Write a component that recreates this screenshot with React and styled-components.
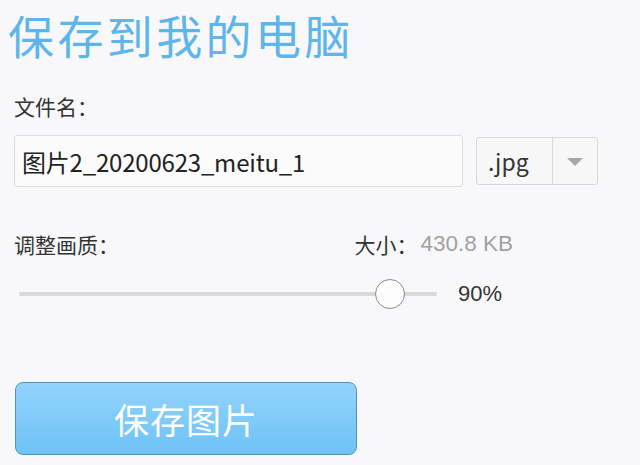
import React from "react";
import styled, { createGlobalStyle } from "styled-components";

const Global = createGlobalStyle`
  html, body { margin: 0; padding: 0; background: #f8f8fb; }
  body { font-family: "Noto Sans CJK SC", "Noto Sans", sans-serif; }
`;

const Page = styled.div`
  width: 640px;
  height: 465px;
  box-sizing: border-box;
  padding: 4px 0 0 14px;
  display: flex;
  flex-direction: column;
  overflow: hidden;
`;

const Title = styled.h1`
  margin: 0 0 0 -6px;
  font-size: 46px;
  font-weight: 400;
  letter-spacing: 3.4px;
  color: #5db5e9;
  line-height: 60px;
`;

const Label = styled.div`
  font-size: 21px;
  color: #333;
  line-height: 30px;
  margin-top: ${(p) => p.$top || 0}px;
`;

const FieldRow = styled.div`
  display: flex;
  align-items: center;
  gap: 12px;
  margin-top: 14px;
`;

const TextInput = styled.div`
  width: 449px;
  height: 52px;
  box-sizing: border-box;
  border: 1px solid #dcdcdc;
  border-radius: 3px;
  background: #fbfbfc;
  display: flex;
  align-items: center;
  padding-left: 7px;
  font-size: 24px;
  letter-spacing: -0.2px;
  color: #222;
`;

const Select = styled.div`
  width: 122px;
  height: 48px;
  box-sizing: border-box;
  border: 1px solid #d6d6d6;
  border-radius: 3px;
  background: #f7f7f8;
  display: flex;
  margin-left: 1px;
`;

const SelectValue = styled.div`
  width: 76px;
  border-right: 1px solid #dadada;
  display: flex;
  align-items: center;
  padding-left: 11px;
  box-sizing: border-box;
  font-size: 23px;
  color: #333;
`;

const SelectArrow = styled.div`
  flex: 1;
  display: flex;
  align-items: center;
  justify-content: center;
  &::after {
    content: "";
    border-left: 8px solid transparent;
    border-right: 8px solid transparent;
    border-top: 8px solid #a8a8a8;
    margin-top: 2px;
  }
`;

const QualityHead = styled.div`
  display: flex;
  align-items: center;
  margin-top: 42px;
  width: 499px;
`;

const SizeInfo = styled.div`
  margin-left: auto;
  display: flex;
  align-items: center;
  font-size: 21px;
  color: #333;
  line-height: 30px;
`;

const SizeValue = styled.span`
  color: #a0a0a0;
  font-family: "Liberation Sans", "Noto Sans", sans-serif;
  font-size: 22.5px;
  margin-left: 3px;
`;

const SliderRow = styled.div`
  display: flex;
  align-items: center;
  margin-top: 19px;
  height: 32px;
`;

const Track = styled.div`
  position: relative;
  margin-left: 5px;
  width: 418px;
  height: 4px;
  border-radius: 2px;
  background: #d9d9db;
`;

const Thumb = styled.div`
  position: absolute;
  top: 50%;
  width: 28px;
  height: 28px;
  border-radius: 50%;
  border: 1.5px solid #8a8a8a;
  background: #fdfdfd;
  transform: translate(-50%, -50%);
`;

const Percent = styled.div`
  margin-left: 21px;
  font-size: 22px;
  color: #333;
  font-family: "Liberation Sans", sans-serif;
`;

const SaveButton = styled.button`
  margin-top: 72px;
  margin-left: 1px;
  width: 342px;
  height: 73px;
  border: 1px solid #4e95bd;
  border-radius: 8px;
  background: linear-gradient(#92d2fb, #6ec3f6);
  color: #fff;
  font-family: "Noto Sans CJK SC", sans-serif;
  font-size: 35px;
  letter-spacing: 1px;
  padding: 0;
  cursor: pointer;
`;

export default function App() {
  const quality = 90;
  const thumbPos = 371;
  return (
    <>
      <Global />
      <Page>
        <Title>保存到我的电脑</Title>
        <Label $top={27}>文件名：</Label>
        <FieldRow>
          <TextInput>图片2_20200623_meitu_1</TextInput>
          <Select>
            <SelectValue>.jpg</SelectValue>
            <SelectArrow />
          </Select>
        </FieldRow>
        <QualityHead>
          <Label>调整画质：</Label>
          <SizeInfo>
            大小：<SizeValue>430.8 KB</SizeValue>
          </SizeInfo>
        </QualityHead>
        <SliderRow>
          <Track>
            <Thumb style={{ left: thumbPos }} />
          </Track>
          <Percent>{quality}%</Percent>
        </SliderRow>
        <SaveButton>保存图片</SaveButton>
      </Page>
    </>
  );
}
